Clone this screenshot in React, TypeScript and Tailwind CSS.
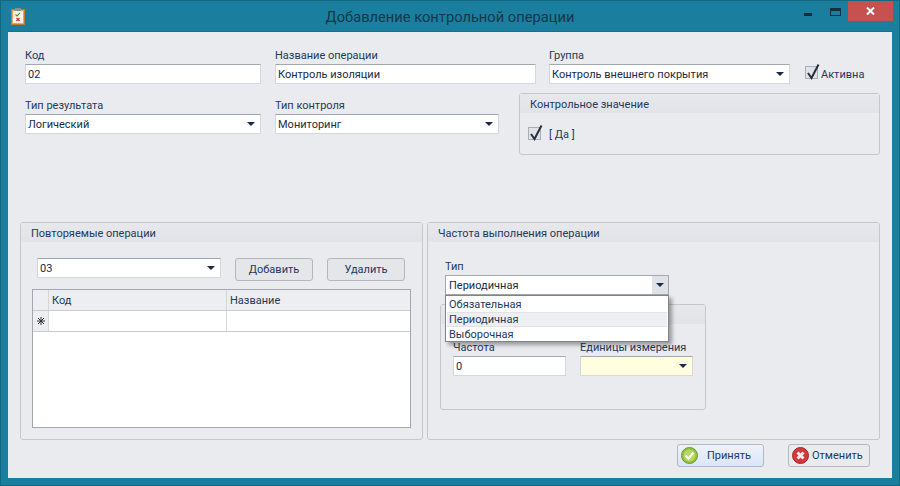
import type { ReactNode } from 'react';

const FONT = "font-['Roboto',sans-serif]";

function Arrow() {
  return <span className="w-0 h-0 border-x-[4px] border-x-transparent border-t-[4px] border-t-[#1b2b45]" />;
}

function Field({ label, children, className }: { label: string; children: ReactNode; className: string }) {
  return (
    <div className={className}>
      <div className="h-[16px] leading-[16px] text-[11px] text-[#1e395b] whitespace-nowrap">{label}</div>
      {children}
    </div>
  );
}

function TextBox({ value, className = 'bg-white' }: { value: string; className?: string }) {
  return (
    <div className={`h-[20px] pl-[2px] pt-[1px] border border-[#d4d7dd] border-t-[#a3a7b2] leading-[18px] text-[11px] text-[#1a2a44] ${className}`}>
      {value}
    </div>
  );
}

function Combo({ value, className = 'bg-white' }: { value: string; className?: string }) {
  return (
    <div className={`h-[20px] pl-[2px] pr-[5px] flex items-center justify-between border border-[#d4d7dd] border-t-[#a3a7b2] text-[11px] text-[#1a2a44] ${className}`}>
      <span className="whitespace-nowrap pt-[2px]">{value}</span>
      <Arrow />
    </div>
  );
}

function Check() {
  return (
    <span className="relative block w-[13px] h-[13px] border border-[#a9adb8] bg-[#dfe2e8]">
      <svg className="absolute left-[0px] top-[-4px]" width="15" height="18" viewBox="0 0 15 18">
        <path d="M2 10 L5.5 15 L12.5 1.5" fill="none" stroke="#26303f" strokeWidth="2" />
      </svg>
    </span>
  );
}

function Panel({ title, className, children }: { title?: string; className: string; children: ReactNode }) {
  return (
    <div className={`border border-[#c4c7cd] rounded-[3px] ${className}`}>
      {title && (
        <div className="h-[19px] pt-[2px] leading-[17px] text-[11px] text-[#1e395b] bg-gradient-to-b from-[#e6e8ec] to-[#e1e3e8] whitespace-nowrap pl-[10px]">
          {title}
        </div>
      )}
      {children}
    </div>
  );
}

function Button({ label, className, children }: { label: string; className: string; children?: ReactNode }) {
  return (
    <div className={`h-[23px] border border-[#b3b7bf] rounded-[3px] flex items-center text-[11px] text-[#1e395b] ${className}`}>
      {children}
      <span className="pt-[2px]">{label}</span>
    </div>
  );
}

function ClipboardIcon() {
  return (
    <svg width="14" height="17" viewBox="0 0 14 17">
      <rect x="0.5" y="1.5" width="13" height="15" fill="#e8a65c" stroke="#c47a2c" />
      <rect x="2" y="3" width="10" height="12" fill="#f6f4ee" />
      <rect x="4" y="0" width="6" height="3" fill="#8a8f96" />
      <path d="M4.5 6.5 L6 8 L9 5" fill="none" stroke="#3f9a3a" strokeWidth="1.1" />
      <path d="M5.5 10 L8.5 13 M8.5 10 L5.5 13" fill="none" stroke="#c0392b" strokeWidth="1.2" />
    </svg>
  );
}

function OkIcon() {
  return (
    <svg width="17" height="17" viewBox="0 0 17 17">
      <circle cx="8.5" cy="8.5" r="8" fill="#8fc13e" stroke="#6f9a2c" />
      <circle cx="8.5" cy="8.5" r="6" fill="#b4d95f" />
      <path d="M4.5 8.5 L7.5 11.5 L12.5 5.5" fill="none" stroke="#ffffff" strokeWidth="2.2" />
    </svg>
  );
}

function CancelIcon() {
  return (
    <svg width="17" height="17" viewBox="0 0 17 17">
      <circle cx="8.5" cy="8.5" r="8" fill="#d2383a" stroke="#a92628" />
      <path d="M5.5 5.5 L11.5 11.5 M11.5 5.5 L5.5 11.5" fill="none" stroke="#f8e8e8" strokeWidth="3" />
    </svg>
  );
}

function NewRowMark() {
  return (
    <svg width="8" height="8" viewBox="0 0 8 8">
      <path d="M4 0 V8 M0 4 H8 M1 1 L7 7 M7 1 L1 7" stroke="#333" strokeWidth="1" />
    </svg>
  );
}

export default function App() {
  return (
    <div className={`w-[900px] h-[486px] flex flex-col bg-[#1a7f9f] border border-[#13677f] ${FONT}`}>
      {/* Заголовок окна */}
      <div className="relative h-[30px] shrink-0 flex items-start">
        <div className="ml-[10px] mt-[7px]">
          <ClipboardIcon />
        </div>
        <div className="absolute left-0 right-0 top-[6px] text-center text-[14.7px] leading-[20px] text-[#17364a]">
          Добавление контрольной операции
        </div>
        <div className="ml-auto mr-[6px] flex items-start">
          <span className="mt-[12px] w-[8px] h-[3px] bg-[#14303f]" />
          <span className="ml-[18px] mt-[7px] w-[11px] h-[8px] border border-[#14303f] border-t-[3px]" />
          <span className="ml-[7px] w-[45px] h-[20px] bg-[#c75050] flex items-center justify-center">
            <svg width="9" height="8" viewBox="0 0 9 8">
              <path d="M1 0.5 L8 7.5 M8 0.5 L1 7.5" stroke="#ffffff" strokeWidth="2" />
            </svg>
          </span>
        </div>
      </div>

      {/* Содержимое */}
      <div className="mx-[7px] h-[447px] bg-[#e9ebef] border-t border-[#14708c] relative">
        <div className="flex pl-[17px] pt-[16px] items-start">
          <Field label="Код" className="w-[236px]">
            <TextBox value="02" />
          </Field>
          <Field label="Название операции" className="w-[261px] ml-[14px]">
            <TextBox value="Контроль изоляции" />
          </Field>
          <Field label="Группа" className="w-[241px] ml-[13px]">
            <Combo value="Контроль внешнего покрытия" />
          </Field>
          <div className="ml-[15px] mt-[18px] flex items-start">
            <Check />
            <span className="ml-[3px] mt-[2px] text-[11px] leading-[14px] text-[#1e395b]">Активна</span>
          </div>
        </div>

        <div className="flex pl-[17px] mt-[9px] items-start">
          <Field label="Тип результата" className="w-[236px] mt-[5px]">
            <Combo value="Логический" />
          </Field>
          <Field label="Тип контроля" className="w-[224px] ml-[14px] mt-[5px]">
            <Combo value="Мониторинг" />
          </Field>
          <Panel title="Контрольное значение" className="w-[361px] h-[62px] ml-[20px]">
            <div className="flex items-start pl-[8px] pt-[14px]">
              <Check />
              <span className="ml-[8px] mt-[1px] text-[11px] leading-[14px] text-[#1e395b]">[ Да ]</span>
            </div>
          </Panel>
        </div>

        <div className="flex pl-[12px] mt-[67px] items-start">
          <Panel title="Повторяемые операции" className="w-[403px] h-[218px]">
            <div className="flex pl-[16px] pt-[16px] items-start">
              <Combo value="03" className="bg-white w-[184px]" />
              <Button label="Добавить" className="w-[78px] ml-[14px] justify-center bg-[#e4e6ea]" />
              <Button label="Удалить" className="w-[78px] ml-[14px] justify-center bg-[#e4e6ea]" />
            </div>
            <div className="mx-[11px] mt-[8px] h-[139px] border border-[#a3a7b2] bg-white text-[11px] text-[#1e395b]">
              <div className="flex h-[21px] bg-[#eceef1] border-b border-[#c9ccd3] leading-[21px]">
                <div className="w-[16px] border-r border-[#d3d6db]" />
                <div className="w-[178px] pl-[3px] border-r border-[#d3d6db]">Код</div>
                <div className="pl-[3px]">Название</div>
              </div>
              <div className="flex h-[21px] border-b border-[#c9ccd3]">
                <div className="w-[16px] bg-[#eceef1] border-r border-[#d3d6db] flex items-center justify-center">
                  <NewRowMark />
                </div>
                <div className="w-[178px] border-r border-[#d3d6db]" />
              </div>
            </div>
          </Panel>

          <Panel title="Частота выполнения операции" className="relative w-[453px] h-[218px] ml-[4px]">
            <div className="pl-[17px] pt-[17px]">
              <Field label="Тип" className="w-[224px]">
                <div className="h-[20px] pl-[3px] flex items-center justify-between border border-[#a3a7b2] bg-white text-[11px] text-[#1a2a44]">
                  <span className="pt-[2px]">Периодичная</span>
                  <span className="h-full w-[16px] bg-[#dfe2e7] flex items-center justify-center">
                    <Arrow />
                  </span>
                </div>
              </Field>
            </div>

            <Panel title=" " className="mx-[12px] mt-[9px] w-[266px] h-[106px]">
              <div className="flex pl-[12px] pt-[16px] items-start">
                <Field label="Частота" className="w-[113px]">
                  <TextBox value="0" />
                </Field>
                <Field label="Единицы измерения" className="w-[113px] ml-[14px]">
                  <Combo value="" className="bg-[#fffede]" />
                </Field>
              </div>
            </Panel>

            {/* Открытый список */}
            <div className="absolute left-[17px] top-[72px] w-[224px] h-[47px] pt-[1px] border border-[#7f838c] bg-white text-[11px] leading-[15px] text-[#1e395b] shadow-[3px_3px_4px_rgba(0,0,0,0.35)]">
              <div className="pl-[3px]">Обязательная</div>
              <div className="pl-[2px] bg-[#eeeff2] border-y border-[#e1e3e7] mx-[1px] leading-[13px]">Периодичная</div>
              <div className="pl-[3px]">Выборочная</div>
            </div>
          </Panel>
        </div>

        <div className="flex pl-[669px] mt-[4px] items-start">
          <Button label="Принять" className="w-[87px] bg-gradient-to-b from-[#eef1f8] to-[#dbe6fb]">
            <span className="ml-[3px] mr-[9px] flex">
              <OkIcon />
            </span>
          </Button>
          <Button label="Отменить" className="w-[82px] ml-[24px] bg-[#e9ebef]">
            <span className="ml-[3px] mr-[3px] flex">
              <CancelIcon />
            </span>
          </Button>
        </div>
      </div>
    </div>
  );
}
